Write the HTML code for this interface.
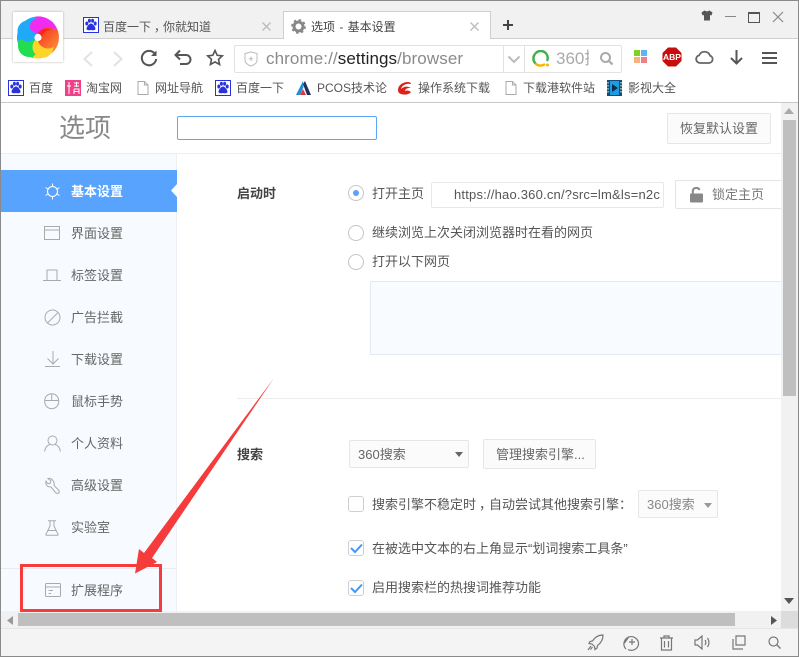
<!DOCTYPE html>
<html><head><meta charset="utf-8"><title>选项 - 基本设置</title>
<style>
html,body{margin:0;padding:0;background:#fff}
#w{position:relative;width:799px;height:657px;overflow:hidden;background:#fff;font-family:"Liberation Sans","Noto Sans CJK SC",sans-serif;font-size:13px;color:#555}
#w div,#w span,#w svg{position:absolute}
.t{white-space:nowrap;line-height:20px;height:20px}
.b{font-size:12px;color:#555;top:78px}
.s{left:71px;color:#666;font-size:13px}
.r{width:14px;height:14px;border:1px solid #c4c4c4;border-radius:50%;background:#fff;left:348px}
.c{width:14px;height:14px;border:1px solid #d0d0d0;border-radius:3px;background:#fff;left:348px}
.btn{border:1px solid #e6e6e6;border-radius:2px;background:#fbfbfb;box-sizing:border-box}
.i{fill:none;stroke:#aaa;stroke-width:1}
.g{fill:none;stroke:#666;stroke-width:2}
</style></head><body><div id="w">
<!-- chrome -->
<div style="left:0;top:0;width:799px;height:38px;background:#f1f1f1"></div>
<div style="left:0;top:38px;width:799px;height:1px;background:#cfcfcf"></div>
<div style="left:283px;top:11px;width:208px;height:28px;box-sizing:border-box;background:#fff;border:1px solid #cfcfcf;border-bottom:0"></div>
<!-- logo -->
<div style="left:13px;top:12px;width:50px;height:50px;background:#fff;box-shadow:0 0 2px #aaa"></div>
<svg style="left:0;top:0" width="70" height="70" viewBox="0 0 70 70">
<defs><linearGradient id="rg" x1="0" y1="0" x2="1" y2="1"><stop offset="0" stop-color="#f8261c"/><stop offset="1" stop-color="#fd9238"/></linearGradient></defs>
<path d="M38 37.500L17.300 41.100A21 21 0 0 1 41.600 16.800Z" fill="#1fa9f8"/>
<path d="M38 37.500L36 16.500A21 21 0 0 1 57 28.500Z" fill="#f02cf0"/>
<path d="M38 37.500L57 28.500A21 21 0 0 1 52 53Z" fill="url(#rg)"/>
<path d="M38 37.500L52 53A21 21 0 0 1 33 58Z" fill="#ffd428"/>
<path d="M38 37.500L33 58A21 21 0 0 1 17.300 41.100Z" fill="#22dd50"/>
<circle cx="29" cy="46" r="11" fill="#22dd50"/>
<circle cx="43" cy="47" r="10.500" fill="#ffd428"/>
<circle cx="48" cy="38" r="10.500" fill="url(#rg)"/>
<circle cx="28" cy="31" r="10.500" fill="#1fa9f8"/>
<path d="M30 28C29 21 36 17 43 18C50 19 55 23 55 27C49 24 43 26 38 33C35 33 31 32 30 28Z" fill="#f02cf0"/>
<path d="M38 33C41 29 47 28 51 30C46 30 42 33 42 37Z" fill="#f8261c"/>
<circle cx="38" cy="37.500" r="3.600" fill="#fff"/></svg>
<!-- tabs -->
<svg style="left:83px;top:17px" width="16" height="16" viewBox="0 0 16 16"><rect x=".5" y=".5" width="15" height="15" fill="#fff" stroke="#2932e1"/><g fill="#2932e1"><ellipse cx="3.800" cy="6.500" rx="1.500" ry="2"/><ellipse cx="6.400" cy="3.800" rx="1.500" ry="2"/><ellipse cx="9.600" cy="3.800" rx="1.500" ry="2"/><ellipse cx="12.200" cy="6.500" rx="1.500" ry="2"/><path d="M8 6.500C6 6.500 3.500 10 3.500 11.800C3.500 13.500 6 13.500 8 13C10 13.500 12.500 13.500 12.500 11.800C12.500 10 10 6.500 8 6.500Z"/></g></svg>
<span class="t" style="left:103px;top:17px;color:#555;font-size:12px">百度一下<span style="position:relative;left:3px">，</span>你就知道</span>
<svg style="left:261px;top:21px" width="11" height="11"><path d="M1.500 1.500L9.500 9.500M9.500 1.500L1.500 9.500" stroke="#bbb" stroke-width="1.300"/></svg>
<svg style="left:291px;top:19px" width="15" height="15" viewBox="0 0 14 14"><circle cx="7" cy="7" r="4.200" fill="none" stroke="#888" stroke-width="2.800"/><circle cx="7" cy="7" r="6.100" fill="none" stroke="#888" stroke-width="1.600" stroke-dasharray="2.300 2.480"/></svg>
<span class="t" style="left:311px;top:17px;color:#444;font-size:12px;word-spacing:1px">选项 - 基本设置</span>
<svg style="left:469px;top:21px" width="11" height="11"><path d="M1.500 1.500L9.500 9.500M9.500 1.500L1.500 9.500" stroke="#bbb" stroke-width="1.300"/></svg>
<svg style="left:502px;top:19px" width="12" height="12"><path d="M6 1V11M1 6H11" stroke="#444" stroke-width="2"/></svg>
<!-- window controls -->
<svg style="left:701px;top:10px" width="12" height="11"><path d="M3.500 .5L0.500 2.500L1.500 5.500L3 5V10.500H9V5L10.500 5.500L11.500 2.500L8.500 .5L6 1.500Z" fill="#555"/></svg>
<div style="left:725px;top:16px;width:11px;height:1px;background:#888"></div>
<div style="left:748px;top:12px;width:10px;height:8px;border:1px solid #555;border-top-width:2px"></div>
<svg style="left:772px;top:11px" width="12" height="12"><path d="M1 1L11 11M11 1L1 11" stroke="#888" stroke-width="1.200"/></svg>
<!-- toolbar -->
<svg style="left:82px;top:51px" width="12" height="16"><path d="M10 1L2.500 8L10 15" fill="none" stroke="#e2e2e2" stroke-width="2"/></svg>
<svg style="left:112px;top:51px" width="12" height="16"><path d="M2 1L9.500 8L2 15" fill="none" stroke="#e2e2e2" stroke-width="2"/></svg>
<svg style="left:140px;top:49px" width="18" height="18" viewBox="0 0 18 18"><path d="M15 5A7.200 7.200 0 1 0 16.200 10" fill="none" stroke="#555" stroke-width="2"/><path d="M16.500 1.500V7H11Z" fill="#555"/></svg>
<svg style="left:174px;top:49px" width="18" height="18" viewBox="0 0 18 18"><path d="M2.500 6H12A4.200 4.200 0 0 1 12 15H6" fill="none" stroke="#555" stroke-width="2"/><path d="M6 1.500L1.500 6L6 10.500" fill="none" stroke="#555" stroke-width="2"/></svg>
<svg style="left:206px;top:49px" width="18" height="17" viewBox="0 0 18 17"><path d="M9 1.500L11.200 6.300L16.300 6.900L12.500 10.400L13.600 15.500L9 12.900L4.400 15.500L5.500 10.400L1.700 6.900L6.800 6.300Z" fill="none" stroke="#555" stroke-width="1.600"/></svg>
<div style="left:234px;top:45px;width:386px;height:26px;border:1px solid #e2e2e2;border-radius:2px"></div>
<div style="left:503px;top:46px;width:1px;height:26px;background:#e2e2e2"></div>
<div style="left:524px;top:46px;width:1px;height:26px;background:#e2e2e2"></div>
<svg style="left:244px;top:51px" width="14" height="16" viewBox="0 0 14 16"><path d="M1 2.500L7 1L13 2.500V9C13 12 10 14 7 15C4 14 1 12 1 9Z" fill="none" stroke="#bbb"/><path d="M7 5.500V10M4.800 7.800H9.200" stroke="#bbb"/></svg>
<span class="t" style="left:266px;top:49px;font-size:17px;color:#8a8a8a;letter-spacing:.1px">chrome://<span style="position:static;color:#222">settings</span>/browser</span>
<svg style="left:507px;top:55px" width="14" height="9"><path d="M1.500 1.500L7 7L12.500 1.500" fill="none" stroke="#bbb" stroke-width="2"/></svg>
<svg style="left:532px;top:50px" width="18" height="18" viewBox="0 0 18 18"><path d="M14.500 4A7 7 0 0 0 3 4" fill="none" stroke="#3db24a" stroke-width="2.400"/><path d="M3 4A7 7 0 0 0 3.500 13.500" fill="none" stroke="#3db24a" stroke-width="2.400"/><path d="M3.500 13.500A7 7 0 0 0 13 14" fill="none" stroke="#f7b500" stroke-width="2.400"/><circle cx="15.500" cy="15" r="1.500" fill="#f7b500"/><path d="M14.500 4A7 7 0 0 1 15 11" fill="none" stroke="#3db24a" stroke-width="2.400"/></svg>
<div style="left:556px;top:47px;width:33px;height:24px;overflow:hidden"><span class="t" style="left:0;top:2px;font-size:17px;color:#aaa">360搜索</span></div>
<svg style="left:599px;top:51px" width="15" height="15"><circle cx="6.500" cy="6.500" r="4.500" fill="none" stroke="#aaa" stroke-width="2"/><path d="M10 10L13.500 13.500" stroke="#aaa" stroke-width="2.200"/></svg>
<div style="left:634px;top:50px;width:6px;height:6px;background:#7ed321"></div>
<div style="left:641px;top:50px;width:6px;height:6px;background:#5cb3f5"></div>
<div style="left:634px;top:57px;width:6px;height:6px;background:#f8b27a"></div>
<div style="left:641px;top:57px;width:6px;height:6px;background:#f08088"></div>
<svg style="left:662px;top:47px" width="20" height="20" viewBox="0 0 20 20"><path d="M6 .5H14L19.500 6V14L14 19.500H6L.5 14V6Z" fill="#c70d0d"/><text x="10" y="13" text-anchor="middle" font-family="Liberation Sans" font-weight="700" font-size="8.500" fill="#fff">ABP</text></svg>
<svg style="left:695px;top:49px" width="19" height="16" viewBox="0 0 19 16"><path d="M5 14H14A3.800 3.800 0 0 0 15 6.600A5.800 5.800 0 0 0 4.200 6.300A3.900 3.900 0 0 0 5 14Z" fill="none" stroke="#666" stroke-width="1.800"/></svg>
<svg style="left:730px;top:50px" width="13" height="15"><path d="M6.500 0V14M1 8L6.500 13.500L12 8" fill="none" stroke="#555" stroke-width="2"/></svg>
<div style="left:762px;top:52px;width:15px;height:2px;background:#555"></div>
<div style="left:762px;top:57px;width:15px;height:2px;background:#555"></div>
<div style="left:762px;top:62px;width:15px;height:2px;background:#555"></div>
<!-- bookmarks -->
<svg style="left:8px;top:80px" width="16" height="16" viewBox="0 0 16 16"><rect x=".5" y=".5" width="15" height="15" fill="#fff" stroke="#2932e1"/><g fill="#2932e1"><ellipse cx="3.800" cy="6.500" rx="1.500" ry="2"/><ellipse cx="6.400" cy="3.800" rx="1.500" ry="2"/><ellipse cx="9.600" cy="3.800" rx="1.500" ry="2"/><ellipse cx="12.200" cy="6.500" rx="1.500" ry="2"/><path d="M8 6.500C6 6.500 3.500 10 3.500 11.800C3.500 13.500 6 13.500 8 13C10 13.500 12.500 13.500 12.500 11.800C12.500 10 10 6.500 8 6.500Z"/></g></svg>
<span class="t b" style="left:29px">百度</span>
<svg style="left:65px;top:80px" width="16" height="16"><rect width="16" height="16" fill="#f0408a"/><path d="M4 2V14M2 6H6M9 3H14M9 6H14M11.500 2V7M9 9H14V14M9 9V14M9 11.500H14" stroke="#fff" fill="none"/></svg>
<span class="t b" style="left:86px">淘宝网</span>
<svg style="left:137px;top:81px" width="12" height="14"><path d="M1 .5H7.500L11 4V13.500H1ZM7.500 .5V4H11" fill="#fff" stroke="#aaa"/></svg>
<span class="t b" style="left:155px">网址导航</span>
<svg style="left:215px;top:80px" width="16" height="16" viewBox="0 0 16 16"><rect x=".5" y=".5" width="15" height="15" fill="#fff" stroke="#2932e1"/><g fill="#2932e1"><ellipse cx="3.800" cy="6.500" rx="1.500" ry="2"/><ellipse cx="6.400" cy="3.800" rx="1.500" ry="2"/><ellipse cx="9.600" cy="3.800" rx="1.500" ry="2"/><ellipse cx="12.200" cy="6.500" rx="1.500" ry="2"/><path d="M8 6.500C6 6.500 3.500 10 3.500 11.800C3.500 13.500 6 13.500 8 13C10 13.500 12.500 13.500 12.500 11.800C12.500 10 10 6.500 8 6.500Z"/></g></svg>
<span class="t b" style="left:236px">百度一下</span>
<svg style="left:296px;top:81px" width="16" height="14"><path d="M7 0L0 14H4L7.500 6Z" fill="#1d8fd8"/><path d="M7 3L11 14H15L9 0Z" fill="#223060"/><path d="M4 14L7 8L10 14Z" fill="#d83a3a"/></svg>
<span class="t b" style="left:317px">PCOS技术论</span>
<svg style="left:397px;top:81px" width="15" height="14"><path d="M1 9C1 4 6 1 11 1C13 1 14 2 14 3C10 2 5 4 4 8C7 5 11 5 14 7C11 6.500 8 8 8 10C10 9 12 9.500 14 11C12 14 6 14 4 13C2 12.500 1 11 1 9Z" fill="#d9241c"/></svg>
<span class="t b" style="left:418px">操作系统下载</span>
<svg style="left:505px;top:81px" width="12" height="14"><path d="M1 .5H7.500L11 4V13.500H1ZM7.500 .5V4H11" fill="#fff" stroke="#aaa"/></svg>
<span class="t b" style="left:523px">下载港软件站</span>
<svg style="left:607px;top:80px" width="15" height="16"><rect width="15" height="16" fill="#0d4f78"/><rect x="3" y="1" width="9" height="14" fill="#1f9ce0"/><path d="M5 4L11 8L5 12Z" fill="#0a2f50"/><path d="M1 2V14M14 2V14" stroke="#fff" stroke-dasharray="1.500 1.500"/></svg>
<span class="t b" style="left:628px">影视大全</span>
<div style="left:0;top:102px;width:799px;height:1px;background:#c8c8c8"></div>
<!-- header -->
<span class="t" style="left:59px;top:112px;font-size:26px;line-height:32px;height:32px;color:#888">选项</span>
<div style="left:177px;top:116px;width:198px;height:22px;border:1px solid #5ba6f5;border-radius:2px"></div>
<div class="btn" style="left:667px;top:113px;width:104px;height:31px"></div>
<span class="t" style="left:680px;top:119px;color:#666">恢复默认设置</span>
<div style="left:1px;top:153px;width:780px;height:1px;background:#ecedf0"></div>
<!-- sidebar -->
<div style="left:1px;top:154px;width:175px;height:459px;background:#f7fbff"></div>
<div style="left:176px;top:154px;width:1px;height:459px;background:#edf0f4"></div>
<div style="left:1px;top:170px;width:176px;height:42px;background:#57a3fd"></div>
<svg style="left:171px;top:184px" width="6" height="13"><path d="M6 0L0 6.500L6 13Z" fill="#fff"/></svg>
<div style="left:1px;top:568px;width:175px;height:1px;background:#e8ecf1"></div>
<svg style="left:44px;top:183px" width="17" height="17" viewBox="0 0 17 17"><circle cx="8.500" cy="8.500" r="5" fill="none" stroke="#fff" stroke-width="1.100"/><path d="M8.500 .5V3M8.500 14V16.500M1.500 4.500L3.700 5.800M13.300 11.200L15.500 12.500M1.500 12.500L3.700 11.200M13.300 5.800L15.500 4.500" stroke="#fff" stroke-width="1"/></svg>
<span class="t s" style="top:182px;color:#fff;font-weight:700">基本设置</span>
<svg style="left:44px;top:226px" width="17" height="15"><rect x=".5" y=".5" width="15" height="13" class="i"/><path d="M.5 4H15.500" class="i"/></svg>
<span class="t s" style="top:224px">界面设置</span>
<svg style="left:43px;top:269px" width="19" height="13"><path d="M4 11V1H14V11M0 11.500H18" class="i"/></svg>
<span class="t s" style="top:266px">标签设置</span>
<svg style="left:44px;top:309px" width="17" height="17"><circle cx="8.500" cy="8.500" r="7.500" class="i"/><path d="M3.500 14L14 3.500" class="i"/></svg>
<span class="t s" style="top:308px">广告拦截</span>
<svg style="left:45px;top:350px" width="16" height="18"><path d="M8 1V14M2.500 8.500L8 14L13.500 8.500M0 16.500H15" class="i"/></svg>
<span class="t s" style="top:350px">下载设置</span>
<svg style="left:44px;top:393px" width="16" height="17"><rect x=".7" y=".7" width="14" height="15" rx="7" class="i"/><path d="M.7 7.500H14.700M7.700 .7V7.500" class="i"/></svg>
<span class="t s" style="top:392px">鼠标手势</span>
<svg style="left:44px;top:435px" width="17" height="17"><circle cx="8.500" cy="5.500" r="4.500" class="i"/><path d="M.7 16.500C1 12 4 10 6 9.500M16.300 16.500C16 12 13 10 11 9.500" class="i"/></svg>
<span class="t s" style="top:434px">个人资料</span>
<svg style="left:45px;top:477px" width="16" height="18"><path d="M3 1.500L6 4L5 6.500L2.500 6.500L1 4C0 8 2.500 10 6 10L10.500 15.500C12.500 17.500 15 16 14 13.500L9 8.500C10 5 7 0.500 3 1.500Z" class="i"/></svg>
<span class="t s" style="top:476px">高级设置</span>
<svg style="left:45px;top:520px" width="15" height="16"><path d="M3 .7H11M5 .7V6L.9 14.500C.7 15 1 15.300 1.500 15.300H12.500C13 15.300 13.300 15 13.100 14.500L9 6V.7M3 10.500H11" class="i"/></svg>
<span class="t s" style="top:518px">实验室</span>
<svg style="left:45px;top:583px" width="16" height="15"><rect x=".5" y=".5" width="15" height="13" rx="1" class="i"/><path d="M.5 4H15.500M3.500 7.500H8M3.500 10.500H6" class="i"/></svg>
<span class="t s" style="top:581px">扩展程序</span>
<!-- content -->
<span class="t" style="left:237px;top:184px;color:#444;font-weight:700">启动时</span>
<div class="r" style="top:185px"></div>
<div style="left:353px;top:190px;width:6px;height:6px;border-radius:50%;background:#57a3fd"></div>
<span class="t" style="left:372px;top:184px">打开主页</span>
<div style="left:431px;top:182px;width:231px;height:24px;border:1px solid #e8e8e8;border-radius:2px"></div>
<span class="t" style="left:454px;top:185px;font-size:13px;letter-spacing:.2px;color:#555">https://hao.360.cn/?src=lm&amp;ls=n2c</span>
<div style="left:675px;top:180px;width:106px;height:29px;box-sizing:border-box;border:1px solid #e4e4e4;border-right:0;border-radius:2px 0 0 2px;background:#fff"></div>
<svg style="left:690px;top:187px" width="13" height="16"><rect y="6.500" width="13" height="9" rx="1" fill="#888"/><path d="M2.800 6.500V4A3.500 3.500 0 0 1 9.500 3" fill="none" stroke="#888" stroke-width="2"/></svg>
<span class="t" style="left:712px;top:185px;color:#777">锁定主页</span>
<div class="r" style="top:225px"></div>
<span class="t" style="left:372px;top:223px">继续浏览上次关闭浏览器时在看的网页</span>
<div class="r" style="top:254px"></div>
<span class="t" style="left:372px;top:252px">打开以下网页</span>
<div style="left:370px;top:281px;width:411px;height:74px;box-sizing:border-box;background:#f8fbff;border:1px solid #e6eaf0;border-right:0"></div>
<div style="left:237px;top:398px;width:544px;height:1px;background:#ececec"></div>
<span class="t" style="left:237px;top:445px;color:#444;font-weight:700">搜索</span>
<div class="btn" style="left:349px;top:440px;width:120px;height:28px"></div>
<span class="t" style="left:358px;top:445px;color:#666">360搜索</span>
<svg style="left:455px;top:452px" width="9" height="5"><path d="M0 0H8L4 5Z" fill="#666"/></svg>
<div class="btn" style="left:483px;top:439px;width:113px;height:30px"></div>
<span class="t" style="left:496px;top:445px;color:#666">管理搜索引擎...</span>
<div class="c" style="top:496px"></div>
<span class="t" style="left:372px;top:495px">搜索引擎不稳定时<span style="position:relative;left:3px">，</span>自动尝试其他搜索引擎：</span>
<div class="btn" style="left:638px;top:490px;width:80px;height:28px"></div>
<span class="t" style="left:647px;top:495px;color:#888">360搜索</span>
<svg style="left:704px;top:503px" width="8" height="5"><path d="M0 0H8L4 5Z" fill="#999"/></svg>
<div class="c" style="top:540px"></div>
<svg style="left:350px;top:543px" width="13" height="11"><path d="M1 5L5 9L12 1.500" fill="none" stroke="#3f9af5" stroke-width="2"/></svg>
<span class="t" style="left:372px;top:539px">在被选中文本的右上角显示“划词搜索工具条”</span>
<div class="c" style="top:580px"></div>
<svg style="left:350px;top:583px" width="13" height="11"><path d="M1 5L5 9L12 1.500" fill="none" stroke="#3f9af5" stroke-width="2"/></svg>
<span class="t" style="left:372px;top:578px">启用搜索栏的热搜词推荐功能</span>
<!-- scrollbars -->
<div style="left:781px;top:103px;width:17px;height:508px;background:#f1f1f1"></div>
<svg style="left:784px;top:108px" width="10" height="6"><path d="M5 0L10 6H0Z" fill="#aaa"/></svg>
<div style="left:783px;top:120px;width:13px;height:276px;background:#bfbfbf"></div>
<svg style="left:784px;top:598px" width="10" height="6"><path d="M5 6L10 0H0Z" fill="#555"/></svg>
<div style="left:1px;top:611px;width:797px;height:17px;background:#f1f1f1"></div>
<div style="left:781px;top:611px;width:17px;height:17px;background:#dcdcdc"></div>
<svg style="left:7px;top:616px" width="6" height="9"><path d="M6 0V9L0 4.500Z" fill="#999"/></svg>
<div style="left:18px;top:613px;width:717px;height:13px;background:#bfbfbf"></div>
<svg style="left:771px;top:616px" width="6" height="9"><path d="M0 0V9L6 4.500Z" fill="#555"/></svg>
<!-- status bar -->
<div style="left:1px;top:628px;width:797px;height:28px;background:#f4f4f4;border-top:1px solid #e6e6e6;box-sizing:border-box"></div>
<svg style="left:587px;top:634px" width="17" height="17" viewBox="0 0 17 17"><path d="M16 1C12 1 8 3 5.500 7L3 7.500L2 9.500L5 10L7.500 12.500L8 15.500L10 14L10.500 11.500C14 9 16 5 16 1ZM4 12L1 16M5.500 13L3.500 15.500" fill="none" stroke="#777" stroke-width="1.200"/></svg>
<svg style="left:623px;top:634px" width="17" height="17" viewBox="0 0 17 17"><path d="M3 15A7.300 7.300 0 1 1 15.500 10.500A7.300 7.300 0 0 1 5 15.500M9 5V11M6 8H12M1.500 9L6 2.500" fill="none" stroke="#777" stroke-width="1.200"/></svg>
<svg style="left:659px;top:635px" width="15" height="16" viewBox="0 0 15 16"><path d="M1 3H14M5 3V1H10V3M2.500 3V15H12.500V3M5.500 6V12.500M9.500 6V12.500" fill="none" stroke="#777" stroke-width="1.200"/></svg>
<svg style="left:694px;top:635px" width="16" height="15" viewBox="0 0 16 15"><path d="M1 5V10H3.500L8 14V1L3.500 5ZM11 5C12 6.500 12 8.500 11 10M13.500 3C15.500 6 15.500 9 13.500 12" fill="none" stroke="#777" stroke-width="1.200"/></svg>
<svg style="left:732px;top:635px" width="14" height="15" viewBox="0 0 14 15"><path d="M4 1H13V10H4ZM1 4V14H11" fill="none" stroke="#777" stroke-width="1.200"/></svg>
<svg style="left:768px;top:636px" width="13" height="13" viewBox="0 0 13 13"><circle cx="5.500" cy="5.500" r="4.500" fill="none" stroke="#777" stroke-width="1.200"/><path d="M9 9L12.500 12.500" stroke="#777" stroke-width="1.300"/></svg>
<!-- annotation -->
<div style="left:20px;top:564px;width:136px;height:42px;border:3px solid #f53b3b"></div>
<svg style="left:0;top:0;pointer-events:none" width="799" height="657"><path d="M135 573.500L139 549L144 553L274 378L152 558L157 562Z" fill="#f53b3b"/></svg>
<!-- window border -->
<div style="left:0;top:0;width:799px;height:1px;background:#8a8a8a"></div>
<div style="left:0;top:0;width:1px;height:657px;background:#8a8a8a"></div>
<div style="left:798px;top:0;width:1px;height:657px;background:#8a8a8a"></div>
<div style="left:0;top:656px;width:799px;height:1px;background:#8a8a8a"></div>
</div></body></html>
